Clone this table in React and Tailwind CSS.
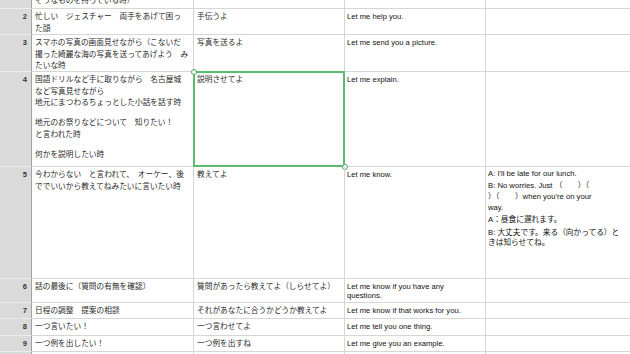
import React from "react";

const font = { fontFamily: '"Liberation Sans", "Noto Sans CJK JP", sans-serif' };

// one spreadsheet row: header number + four cells
function Row({ h, num, a, b, c, d, selected }) {
  return (
    <div className={`flex ${h}`}>
      <div className="w-[32px] shrink-0 bg-[#dadada] border-r border-r-[#a2a2a2] border-b border-b-[#ececec] pr-[4px] pt-[2px] text-right text-[7.5px] leading-[11.6px] font-bold text-[#333]">
        {num}
      </div>
      <div className="w-[162px] shrink-0 border-r border-b border-[#d6d6d6] pl-[3px] pt-[2px] overflow-hidden whitespace-nowrap">
        {a}
      </div>
      <div className="relative w-[151px] shrink-0 border-r border-b border-[#d6d6d6] pl-[3px] pt-[2px] whitespace-nowrap">
        {b}
        {selected && (
          <>
            <div className="absolute left-[-1px] top-[-1px] w-[152px] h-[96px] border-2 border-[#5bbb72]"></div>
            <div className="absolute left-[-3.5px] top-[-3.5px] w-[6px] h-[6px] rounded-full bg-white border border-[#4aaa62]"></div>
            <div className="absolute left-[147.5px] top-[91.5px] w-[6px] h-[6px] rounded-full bg-white border border-[#4aaa62]"></div>
          </>
        )}
      </div>
      <div className="w-[141px] shrink-0 border-r border-b border-[#d6d6d6] pl-[2px] pt-[2px] overflow-hidden whitespace-nowrap">
        {c}
      </div>
      <div className="w-[200px] shrink-0 border-b border-[#d6d6d6] pl-[2px] pt-[2px] overflow-hidden whitespace-nowrap">
        {d}
      </div>
    </div>
  );
}

const en = (t) => <div className="text-[7.65px] leading-[11.6px] text-[#111]">{t}</div>;

export default function App() {
  return (
    <div className="w-[630px] h-[354px] overflow-hidden bg-white text-[7.7px] leading-[11.6px] text-[#2a2a2a]" style={font}>
      <div className="-mt-[7px]">
        <Row h="h-[16px]" num="" a={<div>そうなものを持っている時）</div>} />
        <Row
          h="h-[26px]"
          num="2"
          a={<div>忙しい　ジェスチャー　両手をあげて困っ<br />た顔</div>}
          b={<div>手伝うよ</div>}
          c={en("Let me help you.")}
        />
        <Row
          h="h-[37px]"
          num="3"
          a={<div>スマホの写真の画面見せながら（こないだ<br />撮った綺麗な海の写真を送ってあげよう　み<br />たいな時</div>}
          b={<div>写真を送るよ</div>}
          c={en("Let me send you a picture.")}
        />
        <Row
          h="h-[95px]"
          num="4"
          selected
          a={
            <div>
              <div>国語ドリルなど手に取りながら　名古屋城<br />など写真見せながら<br />地元にまつわるちょっとした小話を話す時</div>
              <div className="mt-[8.5px]">地元のお祭りなどについて　知りたい！<br />と言われた時</div>
              <div className="mt-[9px]">何かを説明したい時</div>
            </div>
          }
          b={<div>説明させてよ</div>}
          c={en("Let me explain.")}
        />
        <Row
          h="h-[112px]"
          num="5"
          a={<div>今わからない　と言われて、　オーケー、後<br />ででいいから教えてねみたいに言いたい時</div>}
          b={<div>教えてよ</div>}
          c={en("Let me know.")}
          d={
            <div className="leading-[10.9px] text-[#111]">
              <div>A: I'll be late for our lunch.</div>
              <div className="mt-[1.2px]">B: No worries. Just （　　）（<br />）（　　）when you're on your<br />way.</div>
              <div className="mt-[1px]">A：昼食に遅れます。</div>
              <div className="mt-[1.8px]">B: 大丈夫です。来る（向かってる）と<br />きは知らせてね。</div>
            </div>
          }
        />
        <Row
          h="h-[24px]"
          num="6"
          a={<div>話の最後に（質問の有無を確認）</div>}
          b={<div>質問があったら教えてよ（しらせてよ）</div>}
          c={<div className="text-[7.65px] leading-[9px] pt-[1px] text-[#111]">Let me know if you have any<br />questions.</div>}
        />
        <Row
          h="h-[16px]"
          num="7"
          a={<div>日程の調整　提案の相談</div>}
          b={<div>それがあなたに合うかどうか教えてよ</div>}
          c={en("Let me know if that works for you.")}
        />
        <Row
          h="h-[17px]"
          num="8"
          a={<div>一つ言いたい！</div>}
          b={<div>一つ言わせてよ</div>}
          c={en("Let me tell you one thing.")}
        />
        <Row
          h="h-[16px]"
          num="9"
          a={<div>一つ例を出したい！</div>}
          b={<div>一つ例を出すね</div>}
          c={en("Let me give you an example.")}
        />
        <Row
          h="h-[20px]"
          num="10"
          a={<div>聞いてもいいかな？</div>}
          b={<div>聞いてもいい？</div>}
        />
      </div>
    </div>
  );
}
